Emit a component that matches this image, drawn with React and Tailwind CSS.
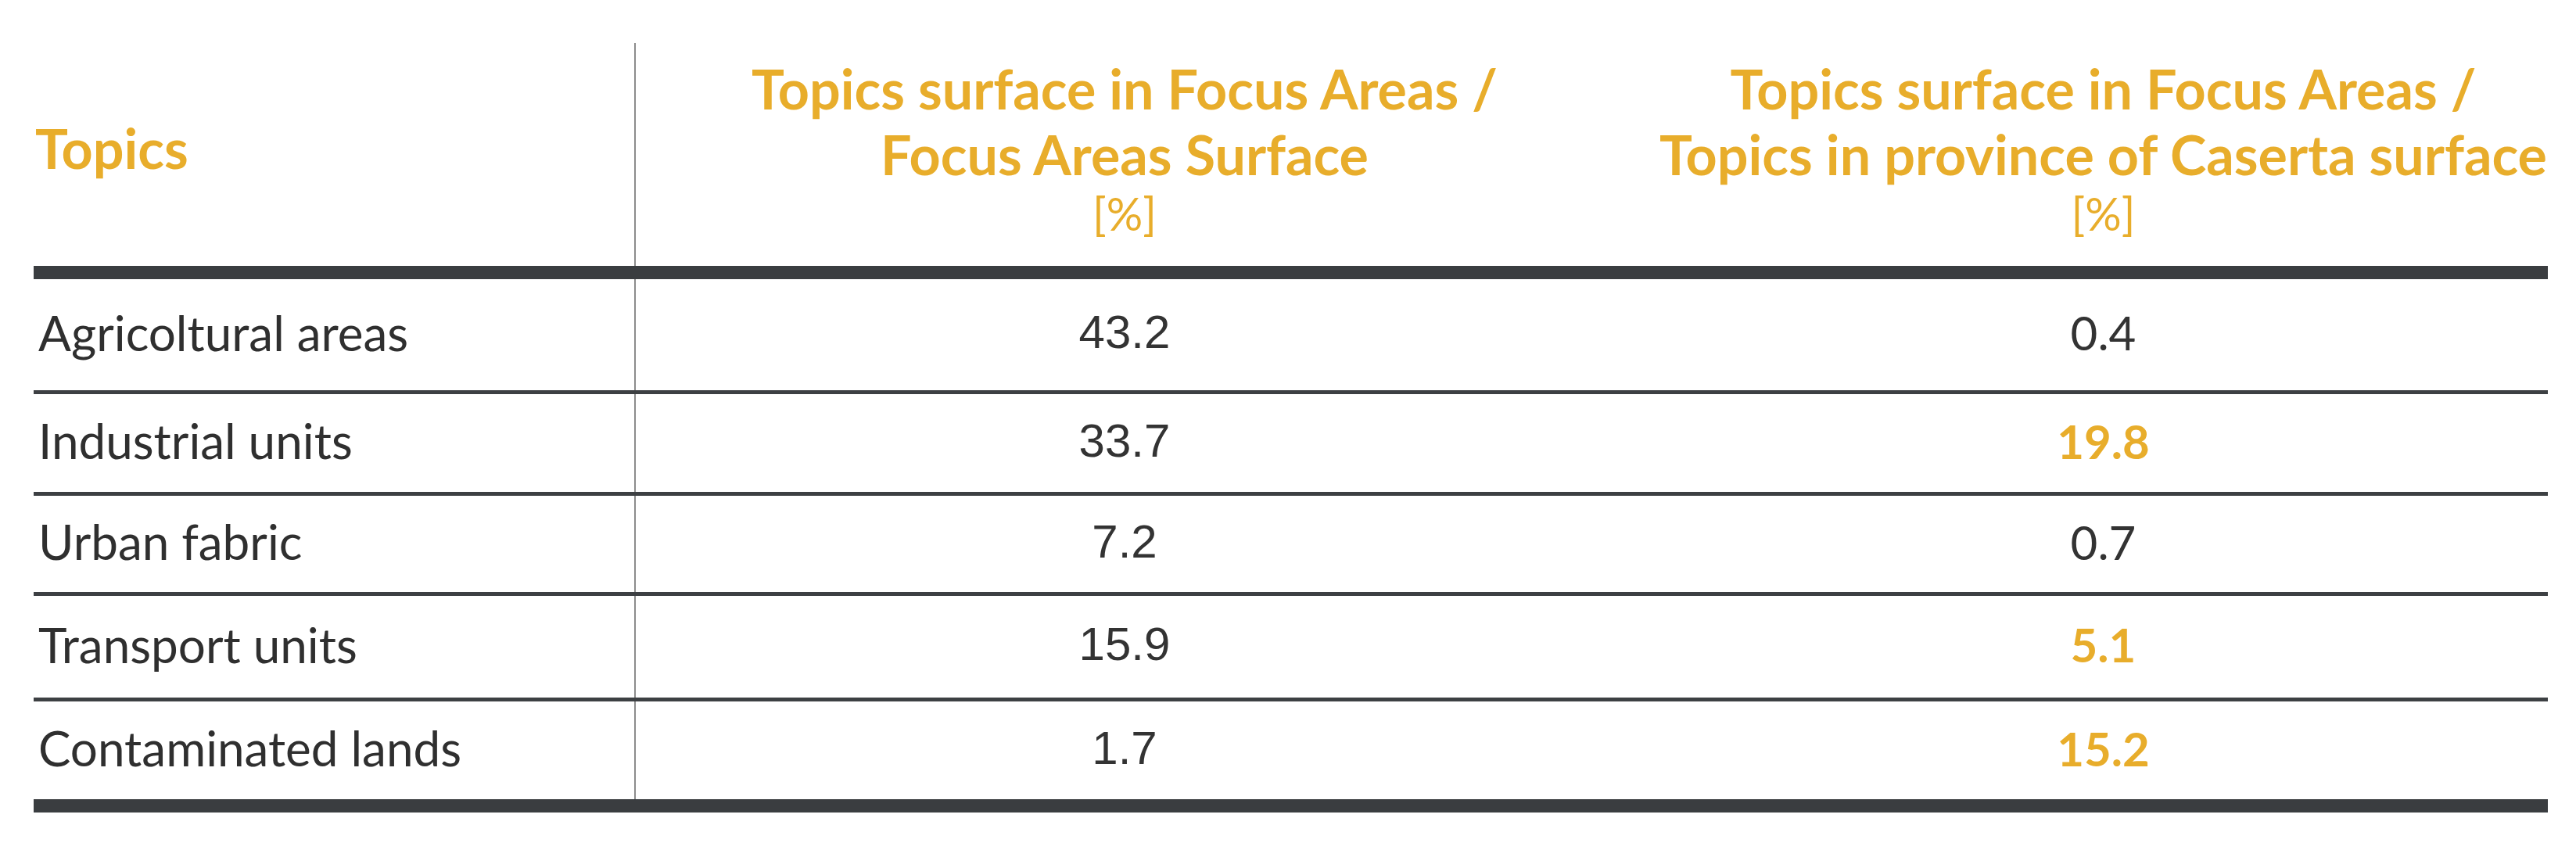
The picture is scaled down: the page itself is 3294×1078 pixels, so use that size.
import React from "react";

const rows = [
  { label: "Agricoltural areas", focus: "43.2", province: "0.4", hi: false, h: "h-[142px]" },
  { label: "Industrial units", focus: "33.7", province: "19.8", hi: true, h: "h-[125px]" },
  { label: "Urban fabric", focus: "7.2", province: "0.7", hi: false, h: "h-[123px]" },
  { label: "Transport units", focus: "15.9", province: "5.1", hi: true, h: "h-[130px]" },
  { label: "Contaminated lands", focus: "1.7", province: "15.2", hi: true, h: "h-[125px]" },
];

const Row = ({ row }) => (
  <div className={`flex ${row.h}`}>
    <div className="w-[770px] shrink-0 border-r-2 border-[#8c8c8c] flex items-center pl-[6px] pb-[6px] font-['Lato'] text-[62px] text-[#2f2f2f]">
      {row.label}
    </div>
    <div className="w-[1250px] shrink-0 flex items-center justify-center pb-[6px] font-['Liberation_Sans'] text-[60px] text-[#333]">
      {row.focus}
    </div>
    <div
      className={`flex-1 flex items-center justify-center pl-[58px] pb-[6px] font-['Lato'] text-[60px] ${
        row.hi ? "font-bold text-[#e8ad2b]" : "text-[#333]"
      }`}
    >
      {row.province}
    </div>
  </div>
);

export default function App() {
  return (
    <div className="w-[3294px] h-[1078px] bg-white pt-[55px] pl-[43px] font-['Lato',sans-serif]">
      <div className="w-[3215px]">
        {/* header */}
        <div className="flex h-[285px] text-[#e8ad2b]">
          <div className="w-[770px] shrink-0 border-r-2 border-[#8c8c8c] flex items-center pl-[2px] pb-[18px] text-[70px] leading-[84px] font-bold">
            Topics
          </div>
          <div className="w-[1250px] shrink-0 flex flex-col items-center justify-center pb-[18px] text-center">
            <span className="text-[70px] leading-[84px] font-bold">Topics surface in Focus Areas /</span>
            <span className="text-[70px] leading-[84px] font-bold">Focus Areas Surface</span>
            <span className="text-[58px] leading-[68px]">[%]</span>
          </div>
          <div className="flex-1 flex flex-col items-center justify-center pl-[58px] pb-[18px] text-center">
            <span className="text-[70px] leading-[84px] font-bold">Topics surface in Focus Areas /</span>
            <span className="text-[70px] leading-[84px] font-bold">Topics in province of Caserta surface</span>
            <span className="text-[58px] leading-[68px]">[%]</span>
          </div>
        </div>
        <div className="h-[17px] bg-[#3a3d40]"></div>

        {rows.map((row, i) => (
          <div key={row.label}>
            <Row row={row} />
            {i < rows.length - 1 ? (
              <div className="h-[5px] bg-[#3d4043]"></div>
            ) : (
              <div className="h-[17px] bg-[#3a3d40]"></div>
            )}
          </div>
        ))}
      </div>
    </div>
  );
}
